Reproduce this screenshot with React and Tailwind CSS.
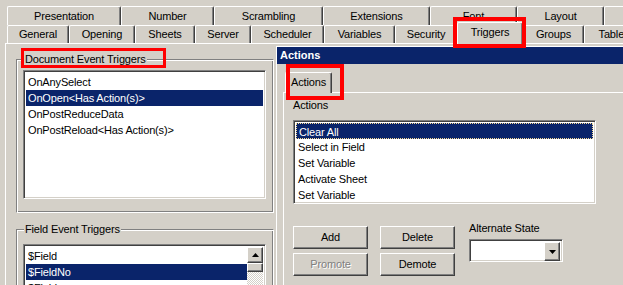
import React from 'react';

const row1 = [
	['Presentation', 'w-[114px]'],
	['Number', 'w-[93px]'],
	['Scrambling', 'w-[109px]'],
	['Extensions', 'w-[107px]'],
	['Font', 'w-[87px]'],
	['Layout', 'w-[87px]'],
	['', 'w-[40px]'],
];

const row2 = [
	['General', 'w-[62px]'],
	['Opening', 'w-[66px]'],
	['Sheets', 'w-[60px]'],
	['Server', 'w-[56px]'],
	['Scheduler', 'w-[73px]'],
	['Variables', 'w-[71px]'],
	['Security', 'w-[62px]'],
	['Triggers', 'w-[66px]', true],
	['Groups', 'w-[61px]'],
	['Tables', 'w-[60px]'],
];

const tab = 'shrink-0 flex items-center justify-center bg-[#d4d0c8] border-l border-t border-r border-l-white border-t-white border-r-[#404040] shadow-[inset_-1px_0_0_#808080] rounded-tl-[2px] rounded-tr-[2px]';
const raised = 'bg-[#d4d0c8] border border-t-white border-l-white border-b-[#404040] border-r-[#404040] shadow-[inset_-1px_-1px_0_#808080]';
const sunken = 'bg-white border border-t-[#808080] border-l-[#808080] border-b-white border-r-white shadow-[inset_1px_1px_0_#404040,inset_-1px_-1px_0_#d4d0c8]';
const etched = 'border border-t-[#808080] border-l-[#808080] border-b-white border-r-white shadow-[inset_1px_1px_0_#fff,inset_-1px_-1px_0_#808080]';

function ListRow({ children, selected, focus }) {
	return (
		<div
			className={
				'h-[16px] leading-[16px] pl-[2px] whitespace-nowrap ' +
				(selected ? 'bg-[#0a246a] text-white ' : '') +
				(focus ? 'border border-dotted border-[#f5db95] leading-[14px] pl-[1px]' : '')
			}
		>
			{children}
		</div>
	);
}

function Button({ children, disabled }) {
	return (
		<div className={'w-[75px] h-[23px] flex items-center justify-center ' + raised}>
			<span className={disabled ? 'text-[#808080] [text-shadow:1px_1px_0_#fff]' : ''}>{children}</span>
		</div>
	);
}

export default function App() {
	return (
		<div className="relative w-[623px] h-[285px] overflow-hidden bg-[#d4d0c8] text-black font-['Liberation_Sans',Arial,sans-serif] text-[11px] tracking-[-0.15px]">
			{/* Tab strip */}
			<div className="h-[25px] pt-[6px] pl-[7px] flex">
				{row1.map(([label, w], i) => (
					<div key={i} className={tab + ' h-[19px] ' + w}>{label}</div>
				))}
			</div>
			<div className="h-[18px] pl-[7px] flex items-start">
				{row2.map(([label, w, sel]) => (
					<div
						key={label}
						className={tab + ' ' + w + (sel ? ' relative z-10 -mt-[3px] h-[22px] pb-[3px]' : ' h-[18px]')}
					>
						{label}
					</div>
				))}
			</div>

			{/* Main panel */}
			<div className="ml-[5px] h-[242px] border-l border-t border-white pl-[10px] pt-[15px]">
				<div className={'relative w-[258px] h-[154px] pt-[10px] pl-[6px] ' + etched}>
					<span className="absolute -top-[7px] left-[7px] px-[1px] bg-[#d4d0c8] leading-[13px]">Document Event Triggers</span>
					<div className={'w-[243px] h-[129px] p-[2px] pt-[3px] ' + sunken}>
						<ListRow>OnAnySelect</ListRow>
						<ListRow selected>OnOpen&lt;Has Action(s)&gt;</ListRow>
						<ListRow>OnPostReduceData</ListRow>
						<ListRow>OnPostReload&lt;Has Action(s)&gt;</ListRow>
					</div>
				</div>
				<div className={'relative mt-[16px] w-[258px] h-[80px] pt-[14px] pl-[6px] ' + etched}>
					<span className="absolute -top-[7px] left-[7px] px-[1px] bg-[#d4d0c8] leading-[13px]">Field Event Triggers</span>
					<div className={'w-[243px] h-[60px] p-[2px] flex ' + sunken}>
						<div className="flex-1 pt-[1px]">
							<ListRow>$Field</ListRow>
							<ListRow selected>$FieldNo</ListRow>
							<ListRow>$Fields</ListRow>
						</div>
						<div className="w-[16px] flex flex-col">
							<div className={'w-[16px] h-[16px] flex items-center justify-center ' + raised}>
								<svg width="7" height="4" viewBox="0 0 7 4"><path d="M3.5 0L7 4H0z" fill="#000" /></svg>
							</div>
							<div className={'w-[16px] h-[9px] ' + raised}></div>
							<div className="flex-1 bg-[repeating-conic-gradient(#d4d0c8_0_25%,#fff_0_50%)] bg-[length:2px_2px]"></div>
						</div>
					</div>
				</div>
			</div>

			{/* Actions window */}
			<div className="absolute left-[276px] top-[46px] right-0 bottom-0 bg-[#d4d0c8] border-l border-t border-white">
				<div className="h-[17px] bg-[#0a246a] text-white font-bold tracking-normal pl-[3px] flex items-center">Actions</div>
				<div className="mt-[8px] ml-[6px]">
					<div className="flex pl-[2px]">
						<div className={tab + ' relative z-10 w-[47px] h-[21px] -mb-[1px] pb-[1px]'}>Actions</div>
					</div>
					<div className="h-[200px] border-l border-t border-white pl-[9px] pt-[6px]">
						<div className="leading-[13px]">Actions</div>
						<div className={'mt-[8px] w-[303px] h-[84px] p-[2px] ' + sunken}>
							<ListRow selected focus>Clear All</ListRow>
							<ListRow>Select in Field</ListRow>
							<ListRow>Set Variable</ListRow>
							<ListRow>Activate Sheet</ListRow>
							<ListRow>Set Variable</ListRow>
						</div>
						<div className="flex items-start">
							<div className="mt-[22px] grid grid-cols-[75px_75px] gap-x-[12px] gap-y-[4px]">
								<Button>Add</Button>
								<Button>Delete</Button>
								<Button disabled>Promote</Button>
								<Button>Demote</Button>
							</div>
							<div className="ml-[14px] mt-[18px]">
								<div className="leading-[13px]">Alternate State</div>
								<div className={'mt-[4px] w-[94px] h-[23px] p-[2px] flex justify-end ' + sunken}>
									<div className={'w-[16px] h-[19px] flex items-center justify-center ' + raised}>
										<svg width="7" height="4" viewBox="0 0 7 4"><path d="M0 0H7L3.5 4z" fill="#000" /></svg>
									</div>
								</div>
							</div>
						</div>
					</div>
				</div>
			</div>

			{/* Red annotation boxes */}
			<div className="absolute left-[453px] top-[17px] w-[73px] h-[31px] border-[4px] border-[#ff0000] z-20"></div>
			<div className="absolute left-[21px] top-[48px] w-[145px] h-[20px] border-[3px] border-[#ff0000] z-20"></div>
			<div className="absolute left-[286px] top-[64px] w-[58px] h-[36px] border-[4px] border-[#ff0000] z-20"></div>
		</div>
	);
}
